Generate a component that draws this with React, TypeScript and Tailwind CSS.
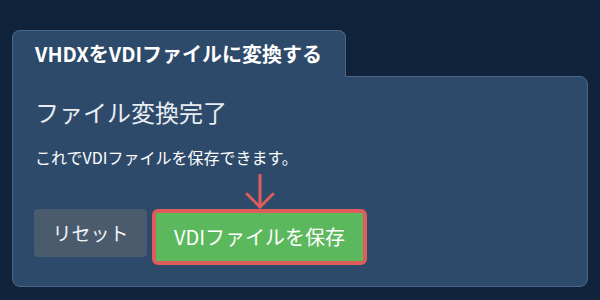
const font = { fontFamily: '"Noto Sans CJK JP", "Noto Sans", sans-serif' }

function DownArrow() {
  return (
    <svg width="30" height="36" viewBox="0 0 30 36" fill="none" className="block">
      <path d="M15 1 V33" stroke="#de5d5a" strokeWidth="3" strokeLinecap="round" />
      <path d="M2 20 L15 33 L28 20" stroke="#de5d5a" strokeWidth="3" strokeLinecap="round" strokeLinejoin="round" />
    </svg>
  )
}

export default function App() {
  return (
    <div className="w-[600px] h-[300px] bg-[#11233a] pl-3 pt-[30px]" style={font}>
      <div className="w-[576px]">
        {/* tab */}
        <div className="relative z-10 -mb-px w-[334px] h-[47px] rounded-t-lg border border-b-0 border-[#4a6688] bg-[#2d4a6a] flex items-center pl-[22px]">
          <span className="text-[20px] font-bold text-white leading-none">VHDXをVDIファイルに変換する</span>
        </div>

        {/* panel */}
        <div className="h-[211px] rounded-b-lg rounded-tr-lg border border-[#4a6688] bg-[#2d4a6a] px-[22px] pt-[17px]">
          <h2 className="text-[24px] leading-[36px] font-normal text-[#e9edf2]">ファイル変換完了</h2>
          <p className="mt-[15px] text-[16px] leading-[24px] text-white">これでVDIファイルを保存できます。</p>

          <div className="mt-[40px] flex items-start gap-[5px] -ml-px">
            <button className="w-[113px] h-[48px] rounded-[4px] bg-[#4b5b6e] text-[19px] text-[#f1f3f5] flex items-center justify-center">
              リセット
            </button>
            <div className="relative rounded-[6px] border-4 border-[#de5d5a]">
              <div className="absolute bottom-full left-1/2 -translate-x-1/2 mb-[3px]">
                <DownArrow />
              </div>
              <button className="w-[207px] h-[48px] bg-[#5cb85c] text-[20px] text-white flex items-center justify-center">
                VDIファイルを保存
              </button>
            </div>
          </div>
        </div>
      </div>
    </div>
  )
}
